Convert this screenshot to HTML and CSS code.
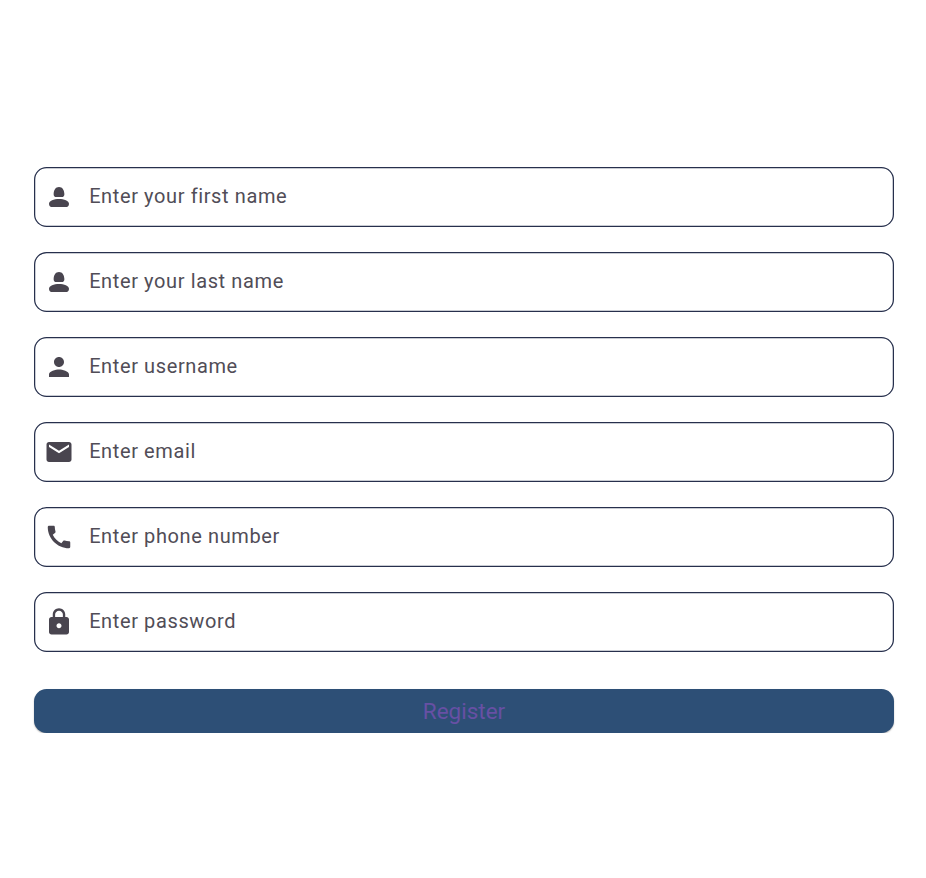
FILE: index.html
```html
<!DOCTYPE html>
<html lang="en">
<head>
<meta charset="utf-8">
<title>Register</title>
<link rel="stylesheet" href="styles.css">
</head>
<body>
<form class="form">
  <label class="field"><svg class="icon" viewBox="0 0 24 24"><path d="M12 4C9.300 4 7.900 6.300 7.700 9.500c-.1 1.600.7 2.500 2.200 2.500h4.200c1.500 0 2.300-.9 2.200-2.500C16.100 6.300 14.700 4 12 4zM4 17.300C4 15 8 13.500 12 13.500s8 1.500 8 3.800c0 1.900-1 2.700-2.700 2.700H6.700C5 20 4 19.200 4 17.300z"/></svg><span class="text">Enter your first name</span></label>
  <label class="field"><svg class="icon" viewBox="0 0 24 24"><path d="M12 4C9.300 4 7.900 6.300 7.700 9.500c-.1 1.600.7 2.500 2.200 2.500h4.200c1.500 0 2.300-.9 2.200-2.500C16.100 6.300 14.700 4 12 4zM4 17.300C4 15 8 13.500 12 13.500s8 1.500 8 3.800c0 1.900-1 2.700-2.700 2.700H6.700C5 20 4 19.200 4 17.300z"/></svg><span class="text">Enter your last name</span></label>
  <label class="field"><svg class="icon" viewBox="0 0 24 24"><path d="M12 12c2.210 0 4-1.790 4-4s-1.790-4-4-4-4 1.790-4 4 1.790 4 4 4zm0 2c-2.670 0-8 1.340-8 4v2h16v-2c0-2.660-5.330-4-8-4z"/></svg><span class="text">Enter username</span></label>
  <label class="field"><svg class="icon" viewBox="0 0 24 24"><path d="M20 4H4c-1.100 0-1.990.9-1.990 2L2 18c0 1.100.9 2 2 2h16c1.100 0 2-.9 2-2V6c0-1.100-.9-2-2-2zm0 4-8 5-8-5V6l8 5 8-5v2z"/></svg><span class="text">Enter email</span></label>
  <label class="field"><svg class="icon" viewBox="0 0 24 24"><path d="M20.010 15.380c-1.230 0-2.420-.2-3.530-.56-.35-.12-.74-.03-1.010.24l-1.570 1.970c-2.830-1.350-5.480-3.900-6.890-6.830l1.950-1.660c.27-.28.35-.67.24-1.020-.37-1.110-.56-2.300-.56-3.530 0-.54-.45-.99-.99-.99H4.190C3.650 3 3 3.240 3 3.990 3 13.280 10.730 21 20.010 21c.71 0 .99-.63.99-1.180v-3.450c0-.54-.45-.99-.99-.99z"/></svg><span class="text">Enter phone number</span></label>
  <label class="field"><svg class="icon" viewBox="0 0 24 24"><path d="M18 8h-1V6c0-2.760-2.240-5-5-5S7 3.240 7 6v2H6c-1.100 0-2 .9-2 2v10c0 1.100.9 2 2 2h12c1.100 0 2-.9 2-2V10c0-1.100-.9-2-2-2zm-6 9c-1.100 0-2-.9-2-2s.9-2 2-2 2 .9 2 2-.9 2-2 2zm3.100-9H8.900V6c0-1.710 1.390-3.100 3.100-3.100s3.100 1.390 3.100 3.100v2z"/></svg><span class="text">Enter password</span></label>
  <button class="submit" type="button">Register</button>
</form>
</body>
</html>
```
FILE: styles.css
```css
body { margin: 0; background: #fff; font-family: Roboto, sans-serif; }
.form { display: flex; flex-direction: column; gap: 25px; padding: 167px 32px 0 34px; }
.field { display: flex; align-items: center; box-sizing: border-box; height: 60px; box-shadow: inset 0 0 0 1.25px #27304d; border-radius: 12.5px; padding-left: 10px; color: #514d57; }
.icon { width: 30px; height: 30px; margin-right: 15.125px; flex: none; fill: #49454f; }
.text { font-size: 20px; line-height: 30px; letter-spacing: .615px; padding-bottom: 2px; }
.submit { height: 44px; margin: 12px 0 0; padding: 0; border: 0; border-radius: 12.5px; background: #2d4f76; color: #6750a4; font: 400 22.500px/44px Roboto, sans-serif; box-shadow: 0 1px 1.500px rgba(0,0,0,.3); }
```
